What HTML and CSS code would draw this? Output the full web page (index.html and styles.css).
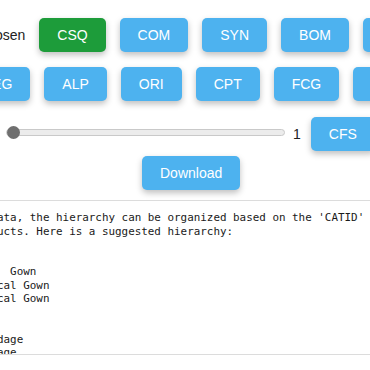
FILE: index.html
```html
<!DOCTYPE html>
<html lang="en">

<head>
    <meta charset="UTF-8">
    <meta name="viewport" content="width=device-width, initial-scale=1.0">
    <title>Hierarchy builder</title>
    <link rel="stylesheet" href="styles.css">
</head>

<body>

    <!-- column buttons -->
    <div class="row row-top">
        <span class="label">Chosen</span>
        <button class="btn chosen">CSQ</button>
        <button class="btn">COM</button>
        <button class="btn">SYN</button>
        <button class="btn">BOM</button>
        <button class="btn">ATT</button>
    </div>

    <div class="row row-second">
        <button class="btn">REG</button>
        <button class="btn">ALP</button>
        <button class="btn">ORI</button>
        <button class="btn">CPT</button>
        <button class="btn">FCG</button>
        <button class="btn">MFG</button>
    </div>

    <!-- level slider -->
    <div class="row row-slider">
        <input type="range" class="slider" min="1" max="10" value="1">
        <span class="value">1</span>
        <button class="btn">CFS</button>
    </div>

    <div class="row row-download">
        <button class="btn">Download</button>
    </div>

    <div class="output">
<pre>Based on the provided data, the hierarchy can be organized based on the 'CATID' column
to group different products. Here is a suggested hierarchy:

Hierarchy:
1. Protective Clothing:  Gown
   - 1.1 Standard Surgical Gown
   - 1.2 Enhanced Surgical Gown

2. Wound Care
     - 2.1 Adhesive Bandage
     - 2.2 Elastic Bandage
</pre>
    </div>

</body>

</html>
```

FILE: styles.css
```css
body {
    margin: 0;
    overflow: hidden;
    font-family: 'Liberation Sans', Arial, sans-serif;
    background: #fff;
}

.row {
    display: flex;
    align-items: center;
    gap: 14px;
}

.row-top {
    margin-top: 18px;
    margin-left: -23px;
}

.row-second {
    margin-top: 15px;
    margin-left: -36px;
}

.row-slider {
    margin-top: 16px;
    margin-left: 6px;
    gap: 0;
}

.row-download {
    margin-top: 5px;
    margin-left: 142px;
}

.label {
    font-size: 14px;
    color: #222;
    flex: none;
}

.btn {
    flex: none;
    height: 34px;
    padding: 0 18px;
    border: none;
    border-radius: 5px;
    background-color: #4db2ef;
    color: #fff;
    font-family: 'Liberation Sans', Arial, sans-serif;
    font-size: 14px;
    box-shadow: 0 3px 6px rgba(0, 0, 0, 0.25);
    cursor: pointer;
}

.btn.chosen {
    background-color: #1d9c3a;
}

.slider {
    -webkit-appearance: none;
    appearance: none;
    flex: none;
    width: 279px;
    height: 7px;
    margin: 0 0 4px 0;
    border: 1px solid #c9c9c9;
    border-radius: 4px;
    background: #ececec;
    box-sizing: border-box;
}

.slider::-webkit-slider-thumb {
    -webkit-appearance: none;
    appearance: none;
    width: 13px;
    height: 13px;
    border-radius: 50%;
    background: #6f6f6f;
}

.value {
    flex: none;
    margin: 0 10px 0 8px;
    font-size: 14px;
    color: #222;
}

.output {
    font-family: 'DejaVu Sans Mono', monospace;
    font-size: 10.9px;
    margin-top: 10px;
    margin-left: calc(-4px - 23ch);
    width: 800px;
    height: 155px;
    box-sizing: border-box;
    border: 1px solid #dcdcdc;
    overflow: hidden;
}

.output pre {
    margin: 0;
    padding-top: 10px;
    font: inherit;
    line-height: 13.5px;
    color: #1a1a1a;
}
```
